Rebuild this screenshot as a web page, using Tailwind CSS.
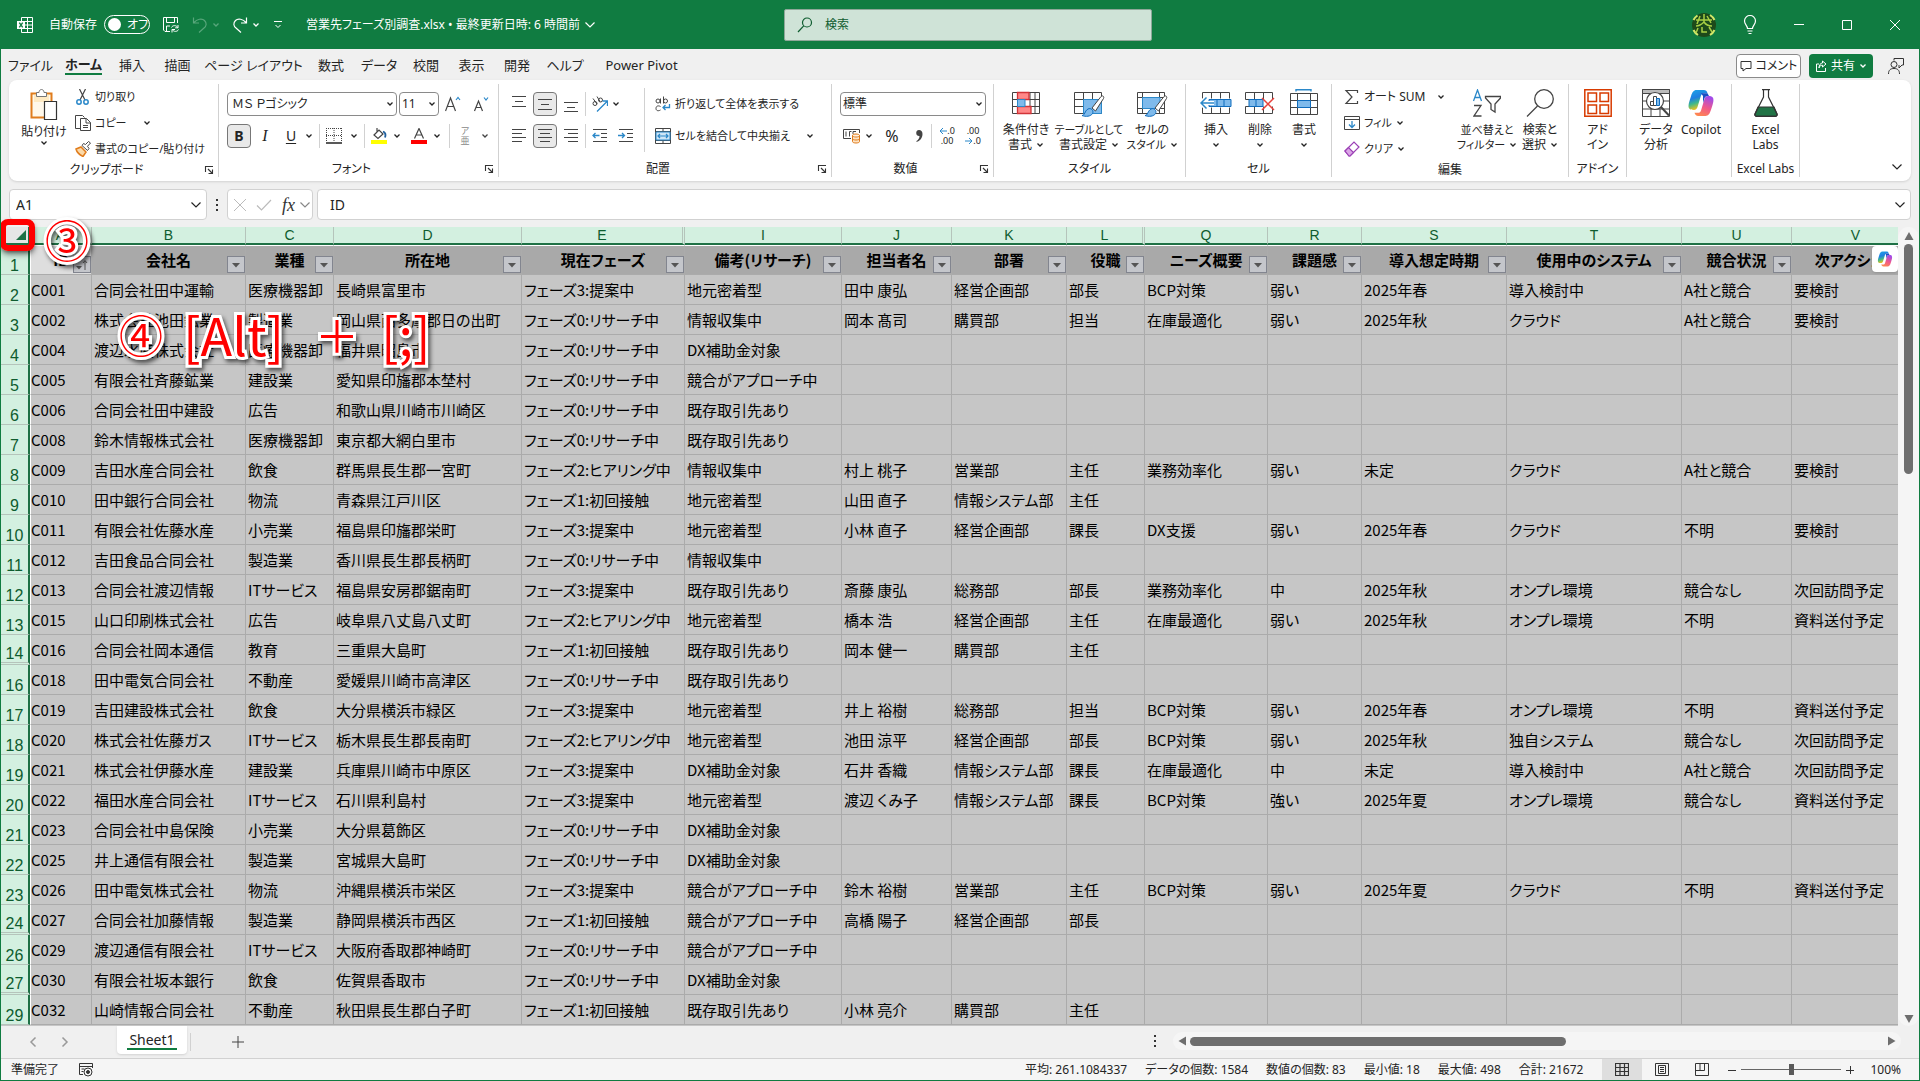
<!DOCTYPE html>
<html lang="ja">

<head>
    <meta charset="UTF-8">
    <meta name="viewport" content="width=device-width, initial-scale=1.0">
    <title>営業先フェーズ別調査.xlsx</title>
    <!-- Tailwind CSS -->
    <script src="https://cdn.jsdelivr.net/npm/@tailwindcss/browser@4"></script>
</head>

<body class="h-screen flex flex-col overflow-hidden bg-[#f0f0f0] border-x border-b border-[#107c41] text-xs text-[#242424] font-['Noto_Sans','Noto_Sans_CJK_JP',sans-serif] [font-feature-settings:'palt']">

    <!-- Iconos compartidos -->
    <svg width="0" height="0" class="hidden">
        <symbol id="chev" viewBox="0 0 8 8"><path d="M1.5 2.5 4 5l2.5-2.5" fill="none" stroke="currentColor" stroke-width="1.3"/></symbol>
        <symbol id="chev-lg" viewBox="0 0 12 12"><path d="M1.5 3.5 6 8l4.500-4.500" fill="none" stroke="currentColor" stroke-width="1.2"/></symbol>
        <symbol id="launch" viewBox="0 0 10 10"><path d="M1.500 7V1.500H9M4 4l4 4M8.500 4.500v4h-4" fill="none" stroke="#333" stroke-width="1.100"/></symbol>
    </svg>
    <svg width="0" height="0" class="absolute">
        <defs>
            <linearGradient id="cpA" x1="0" y1="0" x2="0.300" y2="1"><stop offset="0" stop-color="#1ea7e8"/><stop offset=".45" stop-color="#1f7fe0"/><stop offset=".7" stop-color="#3fb98a"/><stop offset="1" stop-color="#f2c218"/></linearGradient>
            <linearGradient id="cpB" x1="0.600" y1="0" x2="0.200" y2="1"><stop offset="0" stop-color="#a24be8"/><stop offset=".5" stop-color="#f0588a"/><stop offset="1" stop-color="#ff8a4c"/></linearGradient>
        </defs>
        <symbol id="copilot" viewBox="0 0 28 28">
            <path d="M20.500 4.200C20 2.200 18.800 1 16.800 1H9.500C6.500 1 5.200 3.400 4 7.200 2.600 11.600.5 17 2.200 19.600c.9 1.300 2.600 1.400 4.800 1.400 2 0 3-1.200 3.600-3.200l3.300-11C14.500 5 15.500 4.200 17 4.200z" fill="url(#cpA)"/>
            <path d="M7.500 23.800C8 25.800 9.200 27 11.200 27h7.300c3 0 4.300-2.400 5.500-6.200 1.400-4.400 3.500-9.800 1.800-12.400C24.900 7.100 23.200 7 21 7c-2 0-3 1.200-3.600 3.200l-3.300 11c-.6 1.800-1.600 2.600-3.100 2.600z" fill="url(#cpB)"/>
            <path d="M14 4.200h6.500L22 7h-2c-1.600.3-2.400 1.500-2.900 3.200L16 14V7z" fill="#1b4fc4"/>
        </symbol>
    </svg>

    <!-- Barra de título -->
    <header class="h-[49px] shrink-0 bg-[#107c41] text-white flex items-center">
        <div class="w-[783px] shrink-0 flex items-center pl-4">
            <svg class="w-4 h-4 mr-4" viewBox="0 0 16 16" fill="none" stroke="#fff"><path d="M4.500 4V.5h11v15h-11V12M10.500.5v15M5 4.500h10M8 8h7.500M5 11.500h10"/><path d="M0 4h8v8H0z" fill="#fff" stroke="none"/><path d="m2.300 5.700 3.400 4.600M5.700 5.700l-3.400 4.600" stroke="#107c41" stroke-width="1.400"/></svg>
            <span class="w-[55px]">自動保存</span>
            <button role="switch" aria-checked="false" class="w-[46px] h-[19px] rounded-full border border-white flex items-center gap-1.5 pl-[3px]">
                <span class="w-[13px] h-[13px] rounded-full bg-white"></span>オフ
            </button>
            <button aria-label="保存" class="ml-3"><svg class="w-[18px] h-[18px]" viewBox="0 0 18 18" fill="none" stroke="#fff"><path d="M8 15.500H3L1.500 14V1.500h14V7M4.500 1.500v5h8v-5M4.500 15v-5H8"/><path d="M9.500 11.500c1-2.500 5-2.500 6.200 0M16 9v2.800h-2.800M16.500 13.500c-1 2.500-5 2.500-6.200 0M10 16.500v-3h3"/></svg></button>
            <button aria-label="元に戻す" class="ml-3 flex items-center text-[#58a67b]"><svg class="w-4 h-[18px]" viewBox="0 0 16 18" fill="none" stroke="currentColor" stroke-width="1.200"><path d="M1.500 1.500v5.500h5.500M2 6.500C5 3 10 2 12.500 4.500s2 5.500-.5 7.500L7 16.500"/></svg><svg class="w-2 h-2 ml-1"><use href="#chev"/></svg></button>
            <button aria-label="やり直し" class="ml-3 flex items-center"><svg class="w-4 h-[18px]" viewBox="0 0 16 18" fill="none" stroke="currentColor" stroke-width="1.200"><path d="M14.500 1.500v5.500H9M14 6.500C11 3 6 2 3.500 4.500s-2 5.500.5 7.500l5 4.500"/></svg><svg class="w-2 h-2 ml-1"><use href="#chev"/></svg></button>
            <button aria-label="クイック アクセス ツール バーのユーザー設定" class="ml-[14px]"><svg class="w-2 h-2.5" viewBox="0 0 8 10" fill="none" stroke="#fff"><path d="M0 1.500h8M1.500 5 4 7.500 6.500 5"/></svg></button>
            <button class="ml-6 flex items-center gap-1 whitespace-nowrap">営業先フェーズ別調査.xlsx • 最終更新日時: 6 時間前<svg class="w-3 h-3"><use href="#chev-lg"/></svg></button>
        </div>
        <label class="w-[368px] h-8 shrink-0 bg-[#cfe3d7] border border-[#8ea799] rounded-xs flex items-center pl-3 gap-3">
            <svg class="w-4 h-4" viewBox="0 0 16 16" fill="none" stroke="#0e5c2f" stroke-width="1.200"><circle cx="10" cy="5.500" r="4.500"/><path d="M6.700 8.800 1 15"/></svg>
            <input type="text" aria-label="検索" placeholder="検索" class="flex-1 outline-none placeholder:text-[#0e5c2f]">
        </label>
        <div class="ml-auto flex items-center pr-[19px]">
            <svg class="w-6 h-6 mr-[26px]" viewBox="0 0 24 24"><circle cx="12" cy="12" r="12" fill="#1d4a1a"/><path d="M1.500 7a12 12 0 0 1 4-4.500M18 2a12 12 0 0 1 4.500 5M22.500 17a12 12 0 0 1-4.500 5M6 22a12 12 0 0 1-4.500-5" stroke="#d3e86a" stroke-width="2" fill="none"/><path d="M4 7h16M12 1v8M8 3l-3 8M15 3l4 7M4 13c4 0 6-2 8-4 2 3 5 4 8 4M6 15l-2 5M10 14v5h5M17 14l3 5" stroke="#a8cf45" stroke-width="1.500" fill="none"/></svg>
            <button aria-label="ヒント" class="mr-[36px]"><svg class="w-4 h-5" viewBox="0 0 16 20" fill="none" stroke="#fff" stroke-width="1.200"><path d="M5.500 13.500c0-3-3-4-3-7.500a5.500 5.500 0 0 1 11 0c0 3.500-3 4.500-3 7.500zM5.500 16h5M6.500 18.500h3"/></svg></button>
            <button aria-label="最小化" class="mr-[38px]"><svg class="w-2.5 h-2.5" viewBox="0 0 10 10" stroke="#fff"><path d="M0 4.500h10"/></svg></button>
            <button aria-label="最大化" class="mr-[38px]"><svg class="w-2.5 h-2.5" viewBox="0 0 10 10" stroke="#fff" fill="none"><path d="M.5.5h9v9h-9z"/></svg></button>
            <button aria-label="閉じる"><svg class="w-2.5 h-2.5" viewBox="0 0 10 10" stroke="#fff"><path d="m0 0 10 10M10 0 0 10"/></svg></button>
        </div>
    </header>

    <!-- Pestañas -->
    <nav class="h-[31px] shrink-0 flex items-center text-[13px] pl-0.5 pt-0.5 whitespace-nowrap">
        <button class="w-[55px]">ファイル</button>
        <button class="w-[51px] flex justify-center font-bold"><span class="border-b-2 border-[#107c41]">ホーム</span></button>
        <button class="w-[46px]">挿入</button>
        <button class="w-[45px]">描画</button>
        <button class="w-[107px]">ページ レイアウト</button>
        <button class="w-12">数式</button>
        <button class="w-12">データ</button>
        <button class="w-[46px]">校閲</button>
        <button class="w-[45px]">表示</button>
        <button class="w-[46px]">開発</button>
        <button class="w-[50px]">ヘルプ</button>
        <button class="w-[103px]">Power Pivot</button>
        <div class="ml-auto flex items-center gap-2 pr-[14px] text-xs">
            <button class="w-[65px] h-6 bg-white border border-[#8a8a8a] rounded flex items-center justify-center gap-1"><svg class="w-3 h-3" viewBox="0 0 12 12" fill="none" stroke="#333"><path d="M1 1.500h10v7H6L3 11V8.500H1z"/></svg>コメント</button>
            <button class="w-16 h-6 bg-[#107c41] text-white rounded flex items-center justify-center gap-1"><svg class="w-3 h-3" viewBox="0 0 12 12" fill="none" stroke="#fff"><path d="M4 4H1.500v7.500h9V8M7.500 1l3.500 3-3.500 3V5.200C5.500 5.200 4.500 6 4 8c0-3 1.500-5 3.500-5z"/></svg>共有<svg class="w-2 h-2"><use href="#chev"/></svg></button>
            <button aria-label="アカウント" class="ml-1.5"><svg class="w-[18px] h-[18px]" viewBox="0 0 18 18" fill="none" stroke="#333"><circle cx="7" cy="7.500" r="3"/><path d="M1.500 17c0-4 2-5.500 5.500-5.500s5.500 1.500 5.500 5.500M7 3.500v-2h9.500v6.500H15l-3 3V8"/></svg></button>
        </div>
    </nav>

    <!-- Cinta de opciones -->
    <section class="h-[101px] shrink-0 mx-2 bg-white rounded-lg shadow flex py-1 whitespace-nowrap [&_button]:shrink-0">

        <!-- Portapapeles -->
        <div class="w-[210px] shrink-0 border-r border-[#d1d1d1] flex flex-col">
            <div class="h-20 flex">
                <button class="w-[66px] pt-1 pl-1 flex flex-col items-center">
                    <svg class="w-7 h-8" viewBox="0 0 28 32"><path d="M1.500 5.500h20v24h-20z" fill="#fff8ea" stroke="#e07c1c" stroke-width="2"/><path d="M4 6h15v8H4z" fill="#fcd48a" opacity=".4"/><path d="M6.500 8.500v-4H9c0-4 5-4 5 0h2.500v4z" fill="#fff" stroke="#777"/><path d="M14.500 13.500h12v18h-12z" fill="#fff" stroke="#333" stroke-width="1.200"/></svg>
                    <span class="leading-[15px] mt-1">貼り付け</span><svg class="w-2 h-2"><use href="#chev"/></svg>
                </button>
                <div class="text-[11px] [&>button]:h-[26px] [&>button]:flex [&>button]:items-center [&>button]:gap-1">
                    <button><svg class="w-4 h-4" viewBox="0 0 16 16" fill="none"><path d="M4.500 0 10 11M10.500 0 5 11" stroke="#444" stroke-width="1.200"/><circle cx="4" cy="13" r="2.200" stroke="#2b88c9" stroke-width="1.500"/><circle cx="11" cy="13" r="2.200" stroke="#2b88c9" stroke-width="1.500"/></svg>切り取り</button>
                    <button><svg class="w-4 h-4" viewBox="0 0 16 16" fill="none" stroke="#444"><path d="M5 13.500H.5V.5h7l2 2M5.500 3.500h6l4 4v8h-10zM11 3.500V8h4.500M8 10.500h5M8 12.500h5"/></svg>コピー<svg class="w-2 h-2 ml-3"><use href="#chev"/></svg></button>
                    <button><svg class="w-4 h-4" viewBox="0 0 16 16" fill="none"><path d="m1 8 5-2 5 5-3 4.500C5 14 2 12 1 8z" fill="#fbd9a8" stroke="#e07c1c" stroke-width="1.500"/><path d="m7 4.500 5.500 5 1.500-2-1.500-2.200L15.500 2 13.500.5 10.500 3.500 8.500 2.500z" fill="#fff" stroke="#444"/></svg>書式のコピー/貼り付け</button>
                </div>
            </div>
            <div class="h-4 flex items-center leading-4 pr-1"><span class="flex-1 text-center">クリップボード</span><svg class="w-2.5 h-2.5"><use href="#launch"/></svg></div>
        </div>

        <!-- Fuente -->
        <div class="w-[280px] shrink-0 border-r border-[#d1d1d1] flex flex-col">
            <div class="h-20 pt-1 pl-2">
                <div class="h-8 flex items-center">
                    <div class="w-[170px] h-6 border border-[#8a8a8a] rounded flex items-center pl-1 pr-0.5"><select aria-label="フォント" class="flex-1 appearance-none outline-none"><option>ＭＳ Ｐゴシック</option></select><svg class="w-2 h-2"><use href="#chev"/></svg></div>
                    <div class="w-10 h-6 ml-0.5 border border-[#8a8a8a] rounded flex items-center pl-0.5 pr-0.5"><select aria-label="フォント サイズ" class="w-6 flex-1 appearance-none outline-none"><option>11</option></select><svg class="w-2 h-2"><use href="#chev"/></svg></div>
                    <button aria-label="フォント サイズの拡大" class="w-7 flex justify-center"><svg class="w-4 h-4" viewBox="0 0 16 16" fill="none" stroke="#444" stroke-width="1.200"><path d="M.5 15 5.500 2l5 13M2.500 10.500h6"/><path d="m11 4 2-2.500L15 4" stroke="#2b88c9"/></svg></button>
                    <button aria-label="フォント サイズの縮小" class="w-7 flex justify-center"><svg class="w-4 h-4" viewBox="0 0 16 16" fill="none" stroke="#444" stroke-width="1.200"><path d="M1.500 15 5.500 5l4 10M3 11.500h5"/><path d="m11 1.500 2 2.500 2-2.500" stroke="#2b88c9"/></svg></button>
                </div>
                <div class="h-8 flex items-center">
                    <button class="w-6 h-6 border border-[#777] bg-[#e9e9e9] rounded font-bold text-sm leading-none">B</button>
                    <button class="w-7 italic text-base leading-none font-['Liberation_Serif',serif]">I</button>
                    <button class="w-6 text-sm leading-none underline underline-offset-2">U</button>
                    <svg class="w-2 h-2 ml-0.5 mr-1"><use href="#chev"/></svg>
                    <span class="w-px h-6 bg-[#d1d1d1] ml-0.5"></span>
                    <button aria-label="罫線" class="ml-[6px] flex items-center gap-2"><svg class="w-4 h-4" viewBox="0 0 16 16" fill="none" stroke="#444"><path d="M.5 0v14M15.500 0v14M8 0v14M0 .5h16M0 7.500h16" stroke-dasharray="1 1"/><path d="M0 15h16" stroke="#222" stroke-width="1.500"/></svg><svg class="w-2 h-2"><use href="#chev"/></svg></button>
                    <span class="w-px h-6 bg-[#d1d1d1] ml-[6px]"></span>
                    <button aria-label="塗りつぶしの色" class="ml-[6px] flex items-center gap-1.5"><svg class="w-4 h-4" viewBox="0 0 16 16" fill="none"><path d="m3 7 5-5 4 4-5 4.500zM6 4V0" stroke="#444" stroke-width="1.200"/><path d="M12 3.500c2.500 1 3 3 2 6" stroke="#1f5f9e" stroke-width="1.800"/><path d="M0 12h16v4H0z" fill="#ff0"/></svg><svg class="w-2 h-2"><use href="#chev"/></svg></button>
                    <button aria-label="フォントの色" class="ml-[10px] flex items-center gap-1.5"><svg class="w-4 h-4" viewBox="0 0 16 16" fill="none"><path d="M3.500 10.500 8 .5l4.500 10M5 7h6" stroke="#444" stroke-width="1.200"/><path d="M0 12h16v4H0z" fill="red"/></svg><svg class="w-2 h-2"><use href="#chev"/></svg></button>
                    <span class="w-px h-6 bg-[#d1d1d1] ml-2"></span>
                    <button class="ml-[9px] flex items-center gap-2.5 text-[9px] leading-[10px] text-[#888]"><span class="w-3">ア<br>亜</span><svg class="w-2 h-2 text-[#444]"><use href="#chev"/></svg></button>
                </div>
            </div>
            <div class="h-4 flex items-center leading-4 pr-1"><span class="flex-1 text-center">フォント</span><svg class="w-2.5 h-2.5"><use href="#launch"/></svg></div>
        </div>

        <!-- Alineación -->
        <div class="w-[333px] shrink-0 border-r border-[#d1d1d1] flex flex-col">
            <div class="h-20 pt-1 pl-2 flex">
                <div class="w-[138px] h-16 border-r border-[#d1d1d1]">
                    <div class="h-8 flex items-center">
                        <button aria-label="上揃え" class="w-6 flex justify-center"><svg class="w-[14px] h-4" viewBox="0 0 14 16" stroke="#444"><path d="M0 .5h14M3 5.500h8M0 10.500h14"/></svg></button>
                        <button aria-label="上下中央揃え" class="w-6 h-6 mx-0.5 border border-[#777] bg-[#e9e9e9] rounded flex items-center justify-center"><svg class="w-[14px] h-4" viewBox="0 0 14 16" stroke="#444"><path d="M0 3.500h14M3 8.500h8M0 13.500h14"/></svg></button>
                        <button aria-label="下揃え" class="w-6 flex justify-center"><svg class="w-[14px] h-4" viewBox="0 0 14 16" stroke="#444"><path d="M0 6.500h14M3 11.500h8M0 15.500h14"/></svg></button>
                        <span class="w-px h-6 bg-[#d1d1d1] ml-0.5"></span>
                        <button aria-label="方向" class="ml-[6px] flex items-center gap-1"><svg class="w-4 h-4" viewBox="0 0 16 16" fill="none"><circle cx="3" cy="7.500" r="2" stroke="#444"/><circle cx="8.500" cy="4" r="2" stroke="#444"/><path d="M1 2.500 5 8M5 .5l3 5" stroke="#444"/><path d="M5 15.500 15 5.500M10.500 5H15.500V10" stroke="#2b88c9" stroke-width="1.300"/></svg><svg class="w-2 h-2"><use href="#chev"/></svg></button>
                    </div>
                    <div class="h-8 flex items-center">
                        <button aria-label="左揃え" class="w-6 flex justify-center"><svg class="w-[14px] h-[14px]" viewBox="0 0 14 14" stroke="#444"><path d="M0 .5h14M0 4.500h10M0 8.500h14M0 12.500h10"/></svg></button>
                        <button aria-label="中央揃え" class="w-6 h-6 mx-0.5 border border-[#777] bg-[#e9e9e9] rounded flex items-center justify-center"><svg class="w-[14px] h-[14px]" viewBox="0 0 14 14" stroke="#444"><path d="M0 .5h14M2 4.500h10M0 8.500h14M2 12.500h10"/></svg></button>
                        <button aria-label="右揃え" class="w-6 flex justify-center"><svg class="w-[14px] h-[14px]" viewBox="0 0 14 14" stroke="#444"><path d="M0 .5h14M4 4.500h10M0 8.500h14M4 12.500h10"/></svg></button>
                        <span class="w-px h-6 bg-[#d1d1d1] ml-0.5"></span>
                        <button aria-label="インデントを減らす" class="ml-[6px]"><svg class="w-4 h-[14px]" viewBox="0 0 16 14" fill="none" stroke="#444"><path d="M1 .5h14M9 4.500h6M9 8.500h6M1 12.500h14"/><path d="M7.500 6.500H1M3.500 4 1 6.500 3.500 9" stroke="#2b88c9" stroke-width="1.300"/></svg></button>
                        <button aria-label="インデントを増やす" class="ml-[10px]"><svg class="w-4 h-[14px]" viewBox="0 0 16 14" fill="none" stroke="#444"><path d="M1 .5h14M9 4.500h6M9 8.500h6M1 12.500h14"/><path d="M0 6.500h6.500M4 4l2.500 2.500L4 9" stroke="#2b88c9" stroke-width="1.300"/></svg></button>
                    </div>
                </div>
                <div class="pl-2.5 text-[11px]">
                    <button class="h-8 flex items-center gap-1"><svg class="w-4 h-4" viewBox="0 0 16 16" fill="none" stroke="#444"><circle cx="3" cy="5" r="2"/><path d="M5.500 2.500V7.500M8.500.5v7"/><circle cx="10.500" cy="5" r="2"/><path d="M5.500 10.500c-3-1.500-4.500 0-4.500 2s2 3 4.500 1.500"/><path d="M14.500 8v3.500H8M10.500 9 8 11.500l2.500 2.500" stroke="#2b88c9" stroke-width="1.300"/></svg>折り返して全体を表示する</button>
                    <button class="h-8 flex items-center gap-1"><svg class="w-4 h-4" viewBox="0 0 16 16" fill="none" stroke="#444"><path d="M.5.5h15v15H.5zM8 .5v3M8 12.500v3M.5 3.500h15M.5 12.500h15"/><path d="M1 4h14v8H1z" fill="#cfe6f7" stroke="#2b88c9"/><path d="M3 8h10M5 6 3 8l2 2M11 6l2 2-2 2" stroke="#2b88c9" stroke-width="1.200"/></svg>セルを結合して中央揃え<svg class="w-2 h-2 ml-3"><use href="#chev"/></svg></button>
                </div>
            </div>
            <div class="h-4 flex items-center leading-4 pr-1"><span class="flex-1 text-center">配置</span><svg class="w-2.5 h-2.5"><use href="#launch"/></svg></div>
        </div>

        <!-- Número -->
        <div class="w-[162px] shrink-0 border-r border-[#d1d1d1] flex flex-col">
            <div class="h-20 pt-1 pl-2">
                <div class="h-8 flex items-center">
                    <div class="w-[146px] h-6 border border-[#8a8a8a] rounded flex items-center pl-0.5 pr-0.5"><select aria-label="表示形式" class="flex-1 appearance-none outline-none"><option>標準</option></select><svg class="w-2 h-2"><use href="#chev"/></svg></div>
                </div>
                <div class="h-8 flex items-center">
                    <button aria-label="通貨表示形式" class="ml-[3px] flex items-center gap-1"><svg class="w-[18px] h-4" viewBox="0 0 18 16" fill="none" stroke="#444"><path d="M8 10.500H.5v-9h16V5M3 3.500v5M6.500 8.500v-5h2M10 6V3.500h3"/><path d="M9.500 7.500v6c0 2 7 2 7 0v-6c0 2-7 2-7 0zM9.500 7.500c0-2 7-2 7 0M9.500 10.500c0 2 7 2 7 0" stroke="#e07c1c" fill="#fde3c4"/></svg><svg class="w-2 h-2"><use href="#chev"/></svg></button>
                    <button aria-label="パーセント スタイル" class="w-[38px] text-base leading-none">%</button>
                    <button aria-label="桁区切りスタイル" class="w-4 flex justify-center"><svg class="w-2.5 h-4" viewBox="0 0 10 16"><path d="M5 2a3 3 0 1 0 .5 6C5.500 10.500 4 12 2.500 13v1C6 13 8.500 10 8.500 6 8.500 3.500 7 2 5 2z" fill="#444"/></svg></button>
                    <span class="w-px h-6 bg-[#d1d1d1] ml-1"></span>
                    <button class="w-[26px] pl-1 flex flex-col items-center text-[9px] leading-[10px]" aria-label="小数点以下の表示桁数を増やす"><span class="flex items-center"><svg class="w-2 h-2" viewBox="0 0 8 8" fill="none" stroke="#2b88c9"><path d="M8 4H1M4 1 1 4l3 3"/></svg>.0</span><span>.00</span></button>
                    <button class="w-[26px] pl-1 flex flex-col items-center text-[9px] leading-[10px]" aria-label="小数点以下の表示桁数を減らす"><span>.00</span><span class="flex items-center"><svg class="w-2 h-2" viewBox="0 0 8 8" fill="none" stroke="#2b88c9"><path d="M0 4h7M4 1l3 3-3 3"/></svg>.0</span></button>
                </div>
            </div>
            <div class="h-4 flex items-center leading-4 pr-1"><span class="flex-1 text-center">数値</span><svg class="w-2.5 h-2.5"><use href="#launch"/></svg></div>
        </div>

        <!-- Estilos -->
        <div class="w-[192px] shrink-0 border-r border-[#d1d1d1] flex flex-col">
            <div class="h-20 flex pt-[5px] leading-[15px] [&>button]:flex [&>button]:flex-col [&>button]:items-center">
                <button class="w-16"><svg class="w-7 h-7 mb-[5px]" viewBox="0 0 28 28" fill="none" stroke="#444"><path d="M.5 3.500h27v21H.5zM.5 10.500h27M.5 17.500h27M5.500 3.500v21M18 3.500v21M23 3.500v21"/><path d="M5.500 3.500H17v7H5.500zM5.500 17.500H19v7H5.500z" fill="#f88" stroke="#d13438" stroke-width="1.300"/><path d="M5.500 10.500H13v7H5.500z" fill="#7fbaeb" stroke="#2b88c9"/></svg>条件付き<span class="flex items-center gap-1">書式<svg class="w-2 h-2"><use href="#chev"/></svg></span></button>
                <button class="w-[62px]"><svg class="w-8 h-7 mb-[5px]" viewBox="0 0 32 28" fill="none" stroke="#444"><path d="M1.500 3.500h27v21h-27zM1.500 10.500h27M1.500 17.500h27M10.500 3.500v21M19.500 3.500v21"/><path d="M10.500 10.500h18v14h-18z" fill="#7fbaeb" stroke="#2b88c9"/><path d="M19 19 28 7.500c1.500-1.500 3.500 0 2.500 2L22.500 22z" fill="#fff"/><path d="M9 26.500c3 0 2.500-4.500 6-6.500 3-1.500 6 1.500 4.500 4.500-1.500 3-7 3.500-10.500 2z" fill="#7fbaeb" stroke="#0f6cbd"/></svg><span class="text-[11px] leading-[15px]">テーブルとして</span><span class="flex items-center gap-1">書式設定<svg class="w-2 h-2"><use href="#chev"/></svg></span></button>
                <button class="w-16"><svg class="w-8 h-7 mb-[5px]" viewBox="0 0 32 28" fill="none" stroke="#444"><path d="M1.500 3.500h27v21h-27zM1.500 8.500h27M1.500 19.500h27M6.500 3.500v21M23.500 3.500v21"/><path d="M6.500 8.500h17.500v11H6.500z" fill="#7fbaeb" stroke="#2b88c9"/><path d="M19 19 28 7.500c1.500-1.500 3.500 0 2.500 2L22.500 22z" fill="#fff"/><path d="M9 26.500c3 0 2.500-4.500 6-6.500 3-1.500 6 1.500 4.500 4.500-1.500 3-7 3.500-10.500 2z" fill="#7fbaeb" stroke="#0f6cbd"/></svg>セルの<span class="flex items-center gap-1 text-[11px]">スタイル<svg class="w-2 h-2"><use href="#chev"/></svg></span></button>
            </div>
            <div class="h-4 leading-4 text-center">スタイル</div>
        </div>

        <!-- Celdas -->
        <div class="w-[146px] shrink-0 border-r border-[#d1d1d1] flex flex-col">
            <div class="h-20 flex pt-[5px] pl-2 leading-[15px] [&>button]:flex [&>button]:flex-col [&>button]:items-center">
                <button class="w-11"><svg class="w-8 h-7 mb-[5px]" viewBox="0 0 32 28" fill="none" stroke="#444"><path d="M2.500 9.500v-6h27v6M2.500 18.500v6h27v-6M11.500 3.500v6M20.500 3.500v6M11.500 18.500v6M20.500 18.500v6"/><path d="M9 10.500h22v7H9zM17 10.500v7M24 10.500v7" fill="#7fbaeb" stroke="#0f6cbd"/><path d="M14 14H1M6.500 8.500 1 14l5.500 5.500" stroke="#fff" stroke-width="4"/><path d="M14 14H1M6.500 8.500 1 14l5.500 5.500" stroke="#2b88c9" stroke-width="1.500"/></svg>挿入<svg class="w-2 h-2 mt-1"><use href="#chev"/></svg></button>
                <button class="w-11"><svg class="w-8 h-7 mb-[5px]" viewBox="0 0 32 28" fill="none" stroke="#444"><path d="M1.500 10.500v-7h27v7M1.500 17.500v7h27v-7M10.500 3.500v7M19.500 3.500v7M10.500 17.500v7M19.500 17.500v7M1.500 10.500h6M1.500 17.500h6"/><path d="M5 10.500h14v7H5zM12 10.500v7" fill="#7fbaeb" stroke="#0f6cbd"/><path d="m18 9 12 12M30 9 18 21" stroke="#e8413c" stroke-width="1.500"/></svg>削除<svg class="w-2 h-2 mt-1"><use href="#chev"/></svg></button>
                <button class="w-11"><svg class="w-7 h-7 mb-[5px]" viewBox="0 0 28 28" fill="none" stroke="#444"><path d="M.5 4.500h27v21H.5zM.5 11.500h27M.5 18.500h27M7.500 4.500v21M20.500 4.500v21"/><path d="M7.500 11.500h13v7h-13z" fill="#7fbaeb" stroke="#0f6cbd"/><path d="M6 .8h15M6-1v3.500M21-1v3.500" stroke="#2b88c9" stroke-width="1.400"/></svg>書式<svg class="w-2 h-2 mt-1"><use href="#chev"/></svg></button>
            </div>
            <div class="h-4 leading-4 text-center">セル</div>
        </div>

        <!-- Edición -->
        <div class="w-[237px] shrink-0 border-r border-[#d1d1d1] flex flex-col">
            <div class="h-20 flex">
                <div class="w-[122px] pl-3 [&>button]:h-[26px] [&>button]:flex [&>button]:items-center [&>button]:gap-1">
                    <button><svg class="w-4 h-4" viewBox="0 0 16 16" fill="none" stroke="#444" stroke-width="1.200"><path d="M13.500 4V1.500H2L8 8l-6 6.500h11.500V12"/></svg>オート SUM<svg class="w-2 h-2 ml-2"><use href="#chev"/></svg></button>
                    <button><svg class="w-4 h-4" viewBox="0 0 16 16" fill="none" stroke="#444"><path d="M.5 1.500h15v13H.5zM.5 4.500h15"/><path d="M8 6v6M5 9.500 8 12.500l3-3" stroke="#2b88c9" stroke-width="1.300"/></svg><span class="text-[11px]">フィル</span><svg class="w-2 h-2"><use href="#chev"/></svg></button>
                    <button><svg class="w-4 h-4" viewBox="0 0 16 16" fill="none" stroke="#9b3fb5" stroke-width="1.200"><path d="m1 10 9-9 5 5-9 9H5z" fill="#fff"/><path d="m1 10 3.500-3.500 5 5L6 15H5z" fill="#dba6e6"/></svg><span class="text-[11px]">クリア</span><svg class="w-2 h-2"><use href="#chev"/></svg></button>
                </div>
                <div class="flex pt-[5px] leading-[15px] [&>button]:flex [&>button]:flex-col [&>button]:items-center">
                    <button class="w-[66px]"><svg class="w-7 h-7 mb-[5px]" viewBox="0 0 28 28" fill="none" stroke="#444" stroke-width="1.300"><path d="M.5 12 4.500 1l4 11M2 8.500h5" stroke="#2b88c9"/><path d="M1 16.500h7L1 27h7.500M12.500 7.500h15v1.500L22 15v8l-4-2.500V15l-5.500-6z"/></svg><span class="text-[11px] leading-[15px]">並べ替えと</span><span class="flex items-center gap-1 text-[11px] leading-[15px]">フィルター<svg class="w-2 h-2"><use href="#chev"/></svg></span></button>
                    <button class="w-10"><svg class="w-7 h-7 mb-[5px]" viewBox="0 0 28 28" fill="none" stroke="#444" stroke-width="1.300"><circle cx="18" cy="10" r="9.300"/><path d="M11.500 17 1 27.500"/></svg>検索と<span class="flex items-center gap-1">選択<svg class="w-2 h-2"><use href="#chev"/></svg></span></button>
                </div>
            </div>
            <div class="h-4 leading-4 text-center">編集</div>
        </div>

        <!-- Complementos -->
        <div class="w-[58px] shrink-0 border-r border-[#d1d1d1] flex flex-col">
            <div class="h-20 pt-[5px] leading-[15px]">
                <button class="w-full flex flex-col items-center"><svg class="w-7 h-7 mb-[5px]" viewBox="0 0 28 28" fill="none" stroke="#d83b01" stroke-width="1.500"><path d="M.8.8h26.400v26.400H.8zM4 4h8.500v8.500H4zM16 4h8.500v8.500H16zM4 16h8.500v8.500H4zM16 16h8.500v8.500H16z"/></svg>アド<span>イン</span></button>
            </div>
            <div class="h-4 leading-4 text-center">アドイン</div>
        </div>

        <div class="w-[105px] shrink-0 border-r border-[#d1d1d1]">
            <div class="flex pt-[5px] pl-[7px] leading-[15px] [&>button]:flex [&>button]:flex-col [&>button]:items-center">
                <button class="w-11"><svg class="w-7 h-7 mb-[5px]" viewBox="0 0 28 28" fill="none" stroke="#444"><path d="M.5.5h27v27H.5z"/><path d="M.5.5h27v4H.5z" fill="#bbb"/><path d="M.5 12h27M.5 20h27M9 5v22.500M18 5v22.500"/><circle cx="13" cy="12" r="8.500" fill="#fff" stroke-width="1.200"/><path d="m19 18 8 8.500" stroke-width="2"/><path d="M8.500 12.500h3v4h-3zM11.500 7.500h3v9h-3z"/><path d="M14.500 9.500h3v7h-3z" fill="#7fbaeb" stroke="#0f6cbd"/></svg>データ<span>分析</span></button>
                <button class="w-[46px]"><svg class="w-[30px] h-7 mb-[5px]"><use href="#copilot"/></svg>Copilot</button>
            </div>
        </div>

        <div class="w-[68px] shrink-0 border-r border-[#d1d1d1] flex flex-col">
            <div class="h-20 pt-[5px] leading-[15px]">
                <button class="w-full flex flex-col items-center"><svg class="w-7 h-7 mb-[5px]" viewBox="0 0 28 28" fill="none" stroke="#333" stroke-width="1.200"><path d="M6 18h16l3 7c.4 1-.2 2.400-1.500 2.400h-19C3.200 27.400 2.600 26 3 25z" fill="#217346"/><path d="M10 .6h8M11.500.6V8L3 25c-.4 1 .2 2.400 1.500 2.400h19c1.300 0 1.900-1.400 1.500-2.400L16.500 8V.6"/></svg>Excel<span>Labs</span></button>
            </div>
            <div class="h-4 leading-4 text-center">Excel Labs</div>
        </div>
        <button aria-label="リボンを折りたたむ" class="ml-auto self-end mr-2 mb-1"><svg class="w-3 h-3"><use href="#chev-lg"/></svg></button>
    </section>

    <!-- Barra de fórmulas -->
    <section class="h-[31px] shrink-0 mt-2 mb-[7px] mx-2 flex text-sm">
        <label class="w-[198px] shrink-0 bg-white border border-[#d1d1d1] rounded flex items-center px-1"><input type="text" aria-label="名前ボックス" value="A1" class="w-24 flex-1 outline-none pl-0.5"><svg class="w-3 h-3"><use href="#chev-lg"/></svg></label>
        <svg class="w-5 h-[31px] shrink-0" viewBox="0 0 20 31"><path d="M10 10v2M10 15v2M10 20v2" stroke="#333" stroke-width="2"/></svg>
        <div class="w-[86px] shrink-0 bg-white border border-[#d1d1d1] rounded flex items-center pl-1.5 text-[#999]">
            <button aria-label="キャンセル"><svg class="w-3 h-3" viewBox="0 0 12 12" stroke="#bbb"><path d="m0 0 12 12M12 0 0 12"/></svg></button>
            <button aria-label="入力" class="ml-2.5"><svg class="w-4 h-3" viewBox="0 0 16 12" fill="none" stroke="#bbb" stroke-width="1.200"><path d="m1 6.500 4.500 4.500L15 1"/></svg></button>
            <button aria-label="関数の挿入" class="ml-2.5 flex items-center gap-1 italic text-lg leading-none text-[#333] font-['Liberation_Serif',serif]">fx<svg class="w-3 h-3 text-[#888]"><use href="#chev-lg"/></svg></button>
        </div>
        <label class="ml-1 flex-1 bg-white border border-[#d1d1d1] rounded flex items-center pl-3 pr-1"><input type="text" aria-label="数式バー" value="ID" class="flex-1 outline-none"><svg class="w-3 h-3"><use href="#chev-lg"/></svg></label>
    </section>

    <!-- Hoja -->
    <main class="flex-1 min-h-0 flex relative">
        <div class="flex-1 min-w-0 overflow-hidden bg-[#c6c6c6] relative">
            <table class="table-fixed w-[1919px] border-separate border-spacing-0 text-[15px] leading-5 text-black whitespace-nowrap font-['Noto_Sans_CJK_JP',sans-serif]">
                <colgroup>
                    <col class="w-[29px]"><col class="w-[62px]"><col class="w-[154px]"><col class="w-[88px]"><col class="w-[188px]">
                    <col class="w-[163px]"><col class="w-[157px]"><col class="w-[110px]"><col class="w-[115px]"><col class="w-[78px]">
                    <col class="w-[123px]"><col class="w-[94px]"><col class="w-[145px]"><col class="w-[175px]"><col class="w-[110px]"><col class="w-[128px]">
                </colgroup>
                <thead>
                    <tr id="letters"></tr>
                    <tr id="titles"></tr>
                </thead>
                <tbody id="rows"></tbody>
            </table>
            <button aria-label="Copilot" class="absolute right-0 top-[19px] w-[26px] h-[26px] bg-white rounded shadow flex items-center justify-center"><svg class="w-4 h-4"><use href="#copilot"/></svg></button>
        </div>
        <div class="w-[21px] shrink-0 bg-[#f5f5f5] rounded-full flex flex-col items-center pt-1 pb-0.5">
            <svg class="w-2.5 h-2.5" viewBox="0 0 10 10"><path d="M5 1 9.500 9H.5z" fill="#6e6e6e"/></svg>
            <div class="w-[9px] h-[230px] mt-[3px] bg-[#6e6e6e] rounded-full"></div>
            <svg class="w-2.5 h-2.5 mt-auto" viewBox="0 0 10 10"><path d="M5 9 9.500 1H.5z" fill="#6e6e6e"/></svg>
        </div>

        <!-- Anotaciones en rojo -->
        <div class="absolute -left-px -top-2 w-[35px] h-8 border-[6px] border-[#f00] rounded-lg shadow-md shadow-black/50"></div>
        <div class="absolute left-11 -top-[10px] text-[44px] leading-[44px] text-[#f00] font-['Noto_Sans_CJK_JP',sans-serif] [-webkit-text-stroke:6px_white] [paint-order:stroke_fill] drop-shadow-[2px_3px_2px_rgba(0,0,0,0.6)]">③</div>
        <div class="absolute left-[118px] top-20 flex items-center text-[#f00] leading-[54px] font-['Noto_Sans_CJK_JP',sans-serif] [font-feature-settings:normal] [-webkit-text-stroke:6px_white] [paint-order:stroke_fill] drop-shadow-[2px_3px_2px_rgba(0,0,0,0.6)]">
            <span class="text-[44px] w-16">④</span><span class="text-[52px] w-[132px]">[Alt]</span><span class="text-[44px] w-[66px]">＋</span><span class="text-[52px]">[;]</span>
        </div>
    </main>

    <!-- Pestañas de hojas -->
    <section class="h-8 shrink-0 flex items-start">
        <button aria-label="前のシート" class="ml-[26px] mt-2.5 text-[#999]"><svg class="w-3 h-3" viewBox="0 0 12 12" fill="none" stroke="currentColor" stroke-width="1.500"><path d="M8.500 1.500 4 6l4.500 4.500"/></svg></button>
        <button aria-label="次のシート" class="ml-5 mt-2.5 text-[#999]"><svg class="w-3 h-3" viewBox="0 0 12 12" fill="none" stroke="currentColor" stroke-width="1.500"><path d="M3.500 1.500 8 6l-4.500 4.500"/></svg></button>
        <button class="ml-[46px] w-[70px] h-7 bg-white rounded-b shadow-sm flex justify-center text-sm"><span class="border-b-2 border-[#107c41] px-0.5 h-6 leading-7">Sheet1</span></button>
        <span class="w-px h-[18px] bg-[#d1d1d1] mt-[7px] ml-[3px]"></span>
        <button aria-label="新しいシート" class="ml-[41px] mt-2.5"><svg class="w-3 h-3" viewBox="0 0 12 12" stroke="#444"><path d="M0 6h12M6 0v12"/></svg></button>
        <div class="ml-auto w-[748px] flex items-center mt-1.5 mr-[18px]">
            <svg class="w-1 h-3 mr-4" viewBox="0 0 4 12"><path d="M2 0v2M2 5v2M2 10v2" stroke="#333" stroke-width="2"/></svg>
            <div class="flex-1 h-[18px] bg-[#f5f5f5] rounded-full flex items-center px-1">
                <svg class="w-2.5 h-2.5" viewBox="0 0 10 10"><path d="M1.500 5 9 .5v9z" fill="#6e6e6e"/></svg>
                <div class="w-[376px] h-[9px] ml-[3px] bg-[#6e6e6e] rounded-full"></div>
                <svg class="w-2.5 h-2.5 ml-auto" viewBox="0 0 10 10"><path d="M8.500 5 1 .5v9z" fill="#6e6e6e"/></svg>
            </div>
        </div>
    </section>

    <!-- Barra de estado -->
    <footer class="h-[22px] shrink-0 bg-[#f5f5f5] border-t border-[#d1d1d1] flex items-center pl-2.5 pr-[18px] whitespace-nowrap">
        <span>準備完了</span>
        <svg class="w-[14px] h-[14px] ml-5" viewBox="0 0 14 14" fill="none" stroke="#333"><path d="M4 11.500H.5V.5h13V5M.5 3.500h13M2.500 6h3M2.500 8.500h2"/><circle cx="9" cy="9" r="4"/><circle cx="9" cy="9" r="1.500" fill="#333"/></svg>
        <div class="ml-auto flex gap-[18px]">
            <span>平均: 261.1084337</span><span>データの個数: 1584</span><span>数値の個数: 83</span><span>最小値: 18</span><span>最大値: 498</span><span>合計: 21672</span>
        </div>
        <button aria-label="標準" class="ml-[19px] w-10 h-[21px] bg-[#dedede] flex items-center justify-center"><svg class="w-[14px] h-[13px]" viewBox="0 0 14 13" fill="none" stroke="#333" stroke-width="1.200"><path d="M.5.500h13v12H.5zM.5 4.500h13M.5 8.500h13M5 .5v12M9.500.5v12"/></svg></button>
        <button aria-label="ページ レイアウト" class="w-10 flex justify-center"><svg class="w-[14px] h-[13px]" viewBox="0 0 14 13" fill="none" stroke="#333"><path d="M.5.5h13v12H.5zM3.500 2.500h7v8h-7zM5 4.500h4M5 6.500h4M5 8.500h4"/></svg></button>
        <button aria-label="改ページ プレビュー" class="w-10 flex justify-center"><svg class="w-[14px] h-[13px]" viewBox="0 0 14 13" fill="none" stroke="#333"><path d="M.5.5h13v12H.5zM.5 7.500h9M5 .5v7M9.500.5v7"/></svg></button>
        <button aria-label="縮小" class="ml-1.5"><svg class="w-2 h-2" viewBox="0 0 8 8" stroke="#333"><path d="M0 4.500h8"/></svg></button>
        <input type="range" aria-label="ズーム" min="10" max="190" value="100" class="w-[100px] h-px mx-[5px] appearance-none bg-[#666] [&::-webkit-slider-thumb]:appearance-none [&::-webkit-slider-thumb]:w-[5px] [&::-webkit-slider-thumb]:h-[11px] [&::-webkit-slider-thumb]:bg-[#5a5a5a]">
        <button aria-label="拡大"><svg class="w-2 h-2" viewBox="0 0 8 8" stroke="#333"><path d="M0 4.500h8M4.500 0v8"/></svg></button>
        <span class="ml-4">100%</span>
    </footer>

    <script>
        const letters = ['A', 'B', 'C', 'D', 'E', 'I', 'J', 'K', 'L', 'Q', 'R', 'S', 'T', 'U', 'V'];
        const titles = ['ID', '会社名', '業種', '所在地', '現在フェーズ', '備考(リサーチ)', '担当者名', '部署', '役職', 'ニーズ概要', '課題感', '導入想定時期', '使用中のシステム', '競合状況', '次アクション'];

        // numero de fila, luego las columnas separadas por |
        const data = `
2|C001|合同会社田中運輸|医療機器卸|長崎県富里市|フェーズ3:提案中|地元密着型|田中 康弘|経営企画部|部長|BCP対策|弱い|2025年春|導入検討中|A社と競合|要検討
3|C002|株式会社池田鉱業|製造業|岡山県西多摩郡日の出町|フェーズ0:リサーチ中|情報収集中|岡本 髙司|購買部|担当|在庫最適化|弱い|2025年秋|クラウド|A社と競合|要検討
4|C004|渡辺水産株式会社|医療機器卸|福井県昭島市|フェーズ0:リサーチ中|DX補助金対象
5|C005|有限会社斉藤鉱業|建設業|愛知県印旛郡本埜村|フェーズ0:リサーチ中|競合がアプローチ中
6|C006|合同会社田中建設|広告|和歌山県川崎市川崎区|フェーズ0:リサーチ中|既存取引先あり
7|C008|鈴木情報株式会社|医療機器卸|東京都大網白里市|フェーズ0:リサーチ中|既存取引先あり
8|C009|吉田水産合同会社|飲食|群馬県長生郡一宮町|フェーズ2:ヒアリング中|情報収集中|村上 桃子|営業部|主任|業務効率化|弱い|未定|クラウド|A社と競合|要検討
9|C010|田中銀行合同会社|物流|青森県江戸川区|フェーズ1:初回接触|地元密着型|山田 直子|情報システム部|主任
10|C011|有限会社佐藤水産|小売業|福島県印旛郡栄町|フェーズ3:提案中|地元密着型|小林 直子|経営企画部|課長|DX支援|弱い|2025年春|クラウド|不明|要検討
11|C012|吉田食品合同会社|製造業|香川県長生郡長柄町|フェーズ0:リサーチ中|情報収集中
12|C013|合同会社渡辺情報|ITサービス|福島県安房郡鋸南町|フェーズ3:提案中|既存取引先あり|斎藤 康弘|総務部|部長|業務効率化|中|2025年秋|オンプレ環境|競合なし|次回訪問予定
13|C015|山口印刷株式会社|広告|岐阜県八丈島八丈町|フェーズ2:ヒアリング中|地元密着型|橋本 浩|経営企画部|主任|在庫最適化|弱い|2025年秋|オンプレ環境|不明|資料送付予定
14|C016|合同会社岡本通信|教育|三重県大島町|フェーズ1:初回接触|既存取引先あり|岡本 健一|購買部|主任
16|C018|田中電気合同会社|不動産|愛媛県川崎市高津区|フェーズ0:リサーチ中|既存取引先あり
17|C019|吉田建設株式会社|飲食|大分県横浜市緑区|フェーズ3:提案中|地元密着型|井上 裕樹|総務部|担当|BCP対策|弱い|2025年春|オンプレ環境|不明|資料送付予定
18|C020|株式会社佐藤ガス|ITサービス|栃木県長生郡長南町|フェーズ2:ヒアリング中|地元密着型|池田 涼平|経営企画部|部長|BCP対策|弱い|2025年秋|独自システム|競合なし|次回訪問予定
19|C021|株式会社伊藤水産|建設業|兵庫県川崎市中原区|フェーズ3:提案中|DX補助金対象|石井 香織|情報システム部|課長|在庫最適化|中|未定|導入検討中|A社と競合|次回訪問予定
20|C022|福田水産合同会社|ITサービス|石川県利島村|フェーズ3:提案中|地元密着型|渡辺 くみ子|情報システム部|課長|BCP対策|強い|2025年夏|オンプレ環境|競合なし|資料送付予定
21|C023|合同会社中島保険|小売業|大分県葛飾区|フェーズ0:リサーチ中|DX補助金対象
22|C025|井上通信有限会社|製造業|宮城県大島町|フェーズ0:リサーチ中|DX補助金対象
23|C026|田中電気株式会社|物流|沖縄県横浜市栄区|フェーズ3:提案中|競合がアプローチ中|鈴木 裕樹|営業部|主任|BCP対策|弱い|2025年夏|クラウド|不明|資料送付予定
24|C027|合同会社加藤情報|製造業|静岡県横浜市西区|フェーズ1:初回接触|競合がアプローチ中|高橋 陽子|経営企画部|部長
26|C029|渡辺通信有限会社|ITサービス|大阪府香取郡神崎町|フェーズ0:リサーチ中|競合がアプローチ中
27|C030|有限会社坂本銀行|飲食|佐賀県香取市|フェーズ0:リサーチ中|DX補助金対象
29|C032|山崎情報合同会社|不動産|秋田県長生郡白子町|フェーズ1:初回接触|既存取引先あり|小林 亮介|購買部|主任`.trim().split('\n').map(line => line.split('|'));

        const rowHead = "p-0 h-[30px] align-bottom font-normal text-[#0e5c2f] bg-[#d3f0e0] border-r-2 border-r-[#1e7145] text-base leading-4 font-['Liberation_Sans',sans-serif] ";
        // filas y columnas ocultas: borde doble
        const hiddenAfterRow = ['14', '24', '27'];
        const hiddenAfterCol = ['E', 'L'];

        document.getElementById('letters').innerHTML =
            `<th class="p-0 h-[18px] bg-[#e6e6e6] border-r-2 border-b-2 border-[#1e7145]"><svg class="w-2.5 h-2.5 ml-auto mr-0.5" viewBox="0 0 10 10"><path d="M10 0v10H0z" fill="#1e7145"/></svg></th>` +
            letters.map(l => `<th class="p-0 h-[18px] align-bottom font-normal text-sm leading-4 font-['Liberation_Sans',sans-serif] text-[#0e5c2f] bg-[#d3f0e0] border-b-2 border-b-[#1e7145] border-r-[#b5c4bb] ${hiddenAfterCol.includes(l) ? 'border-r-3 [border-right-style:double]' : 'border-r'}">${l}</th>`).join('');

        document.getElementById('titles').innerHTML =
            `<th class="${rowHead} border-b border-b-[#b5c4bb]">1</th>` +
            titles.map((t, i) => `<th class="relative p-0 h-[30px] font-bold border-t border-t-white border-r border-b border-r-[#ababab] border-b-[#ababab] ${i === 0 ? 'bg-[#dedede] border-l border-l-white' : 'bg-[#a9a9a9]'}">${t}<button aria-label="${t} フィルター" class="absolute right-0 bottom-px w-[18px] h-[17px] border border-[#82858f] bg-[#c4c6cb] flex items-center justify-center">${i === 0
                ? '<svg class="w-3.5 h-3" viewBox="0 0 14 12"><path d="M1 7h6l-3 3.500z" fill="#555"/><path d="M10 11V2M8 4l2-2.500L12 4" stroke="#555" fill="none"/></svg>'
                : '<svg class="w-2 h-2" viewBox="0 0 8 8"><path d="M0 2h8L4 6.500z" fill="#555"/></svg>'}</button></th>`).join('');

        document.getElementById('rows').innerHTML = data.map(r => {
            let html = `<th class="${rowHead} border-b-[#b5c4bb] ${hiddenAfterRow.includes(r[0]) ? 'border-b-3 [border-bottom-style:double]' : 'border-b'}">${r[0]}</th>`;
            for (let i = 1; i <= 15; i++) {
                html += `<td class="p-0 h-[30px] overflow-hidden border-r border-b border-[#ababab] ${i === 1 ? 'border-l border-l-white' : 'pl-0.5'}">${r[i] || ''}</td>`;
            }
            return `<tr>${html}</tr>`;
        }).join('');
    </script>
</body>

</html>
